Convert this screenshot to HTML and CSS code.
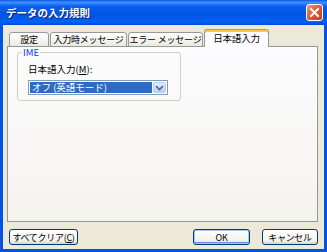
FILE: index.html
```html
<!DOCTYPE html>
<html>
<head>
  <meta charset="utf8">
  <title>データの入力規則</title>
  <link rel="stylesheet" href="styles.css">
</head>
<body>

<div class="window">
  <div class="titlebar">
    <span class="title">データの入力規則</span>
    <button class="close" title="閉じる">
      <svg width="11" height="11" viewBox="0 0 11 11">
        <path d="M2 2 L9 9 M9 2 L2 9" stroke="#fff" stroke-width="2" stroke-linecap="square" />
      </svg>
    </button>
  </div>

  <div class="frame">
    <div class="tabs">
      <div class="tab tab-1">設定</div>
      <div class="tab tab-2">入力時メッセージ</div>
      <div class="tab tab-3">エラー メッセージ</div>
      <div class="tab tab-4 active">日本語入力</div>
    </div>

    <div class="panel">
      <fieldset class="group">
        <legend>IME</legend>
        <div class="field-label">日本語入力(<u>M</u>):</div>
        <div class="combo">
          <div class="combo-value">オフ (英語モード)</div>
          <div class="combo-btn">
            <svg width="9" height="6" viewBox="0 0 9 6">
              <path d="M1 1 L4.5 4.5 L8 1" fill="none" stroke="#4d6185" stroke-width="1.6" />
            </svg>
          </div>
        </div>
      </fieldset>
    </div>

    <div class="footer">
      <button class="btn btn-clear">すべてクリア(<u>C</u>)</button>
      <button class="btn btn-ok">OK</button>
      <button class="btn btn-cancel">キャンセル</button>
    </div>
  </div>
</div>

</body>
</html>
```

FILE: styles.css
```css
body { padding: 0; margin: 0; font-family: "Noto Sans CJK JP", "Liberation Sans", sans-serif; font-size: 9.5px; white-space: nowrap; }
.window { width: 327px; height: 252px; box-sizing: border-box; display: flex; flex-direction: column; background: #0054e3; }

.titlebar { height: 25px; flex: none; display: flex; align-items: center; padding: 0 4px 0 6px; box-sizing: border-box;
  background: linear-gradient(#0a5ae6 0%, #3d8fff 10%, #0a5eef 25%, #0054e3 60%, #0061f5 88%, #0048d6 100%); }
.titlebar .title { color: #fff; font-weight: bold; font-size: 10.5px; text-shadow: 1px 1px 0 #0a1e80; }
.titlebar .close { margin-left: auto; width: 17px; height: 17px; padding: 0; border: 1px solid #fff; border-radius: 3px;
  background: linear-gradient(135deg, #f19a7f 0%, #e0603f 40%, #c93c17 100%); display: flex; align-items: center; justify-content: center; }

.frame { flex: 1; margin: 0 3px 3px 3px; background: #ece9d8; padding: 4px 6px 0 4px; display: flex; flex-direction: column; }

.tabs { display: flex; align-items: flex-end; gap: 1px; padding-left: 2px; height: 18px; margin-bottom: -1px; position: relative; z-index: 1; }
.tab { height: 15px; box-sizing: border-box; border: 1px solid #919b9c; border-radius: 3px 3px 0 0; font-size: 9px; letter-spacing: -0.2px;
  background: linear-gradient(#ffffff, #f4f3ee 60%, #e9e8e1); color: #000; display: flex; align-items: center; justify-content: center; line-height: 1; }
.tab-1 { width: 40px; }
.tab-2 { width: 77px; }
.tab-3 { width: 75px; }
.tab-4 { width: 65px; }
.tab.active { height: 18px; border-bottom: none; border-top: 1px solid #e68b2c; box-shadow: inset 0 2px 0 #ffc73c; background: #fcfcfe; padding-top: 1px; font-size: 9.5px; }

.panel { height: 176px; box-sizing: border-box; border: 1px solid #919b9c; background: linear-gradient(#fcfcfe, #f4f3ee); padding: 0 9px; }

.group { width: 164px; box-sizing: border-box; margin: 0; padding: 6px 12px 5px 10px; border: 1px solid #d0d0bf; border-radius: 3px; }
.group legend { color: #0046d5; padding: 0 1px; margin-left: -6px; line-height: 10px; }
.field-label { line-height: 12px; }
.combo { margin-top: 5px; width: 140px; height: 15px; box-sizing: border-box; border: 1px solid #7f9db9; background: #fff; display: flex; padding: 1px; }
.combo-value { flex: 1; background: #316ac5; color: #fff; line-height: 11px; padding-left: 2px; margin-right: 1px; }
.combo-btn { width: 13px; box-sizing: border-box; border: 1px solid #b8cdf5; border-radius: 2px; background: linear-gradient(#e4edfe, #b9d0fa); display: flex; align-items: center; justify-content: center; }

.footer { display: flex; padding: 7px 0 0 2px; }
.btn { height: 16px; padding: 0; border: 1px solid #003c74; border-radius: 3px; font-family: inherit; font-size: 9px; letter-spacing: -0.3px; line-height: 1; color: #000; white-space: nowrap;
  background: linear-gradient(#ffffff, #f3f2ec 75%, #d9d4c8); }
.btn-clear { width: 69px; }
.btn-ok { width: 57px; margin-left: auto; box-shadow: inset 0 0 0 1px #a9c7f5, inset 0 -1px 0 1px #6b8ced; }
.btn-cancel { width: 56px; margin-left: 12px; }
```
